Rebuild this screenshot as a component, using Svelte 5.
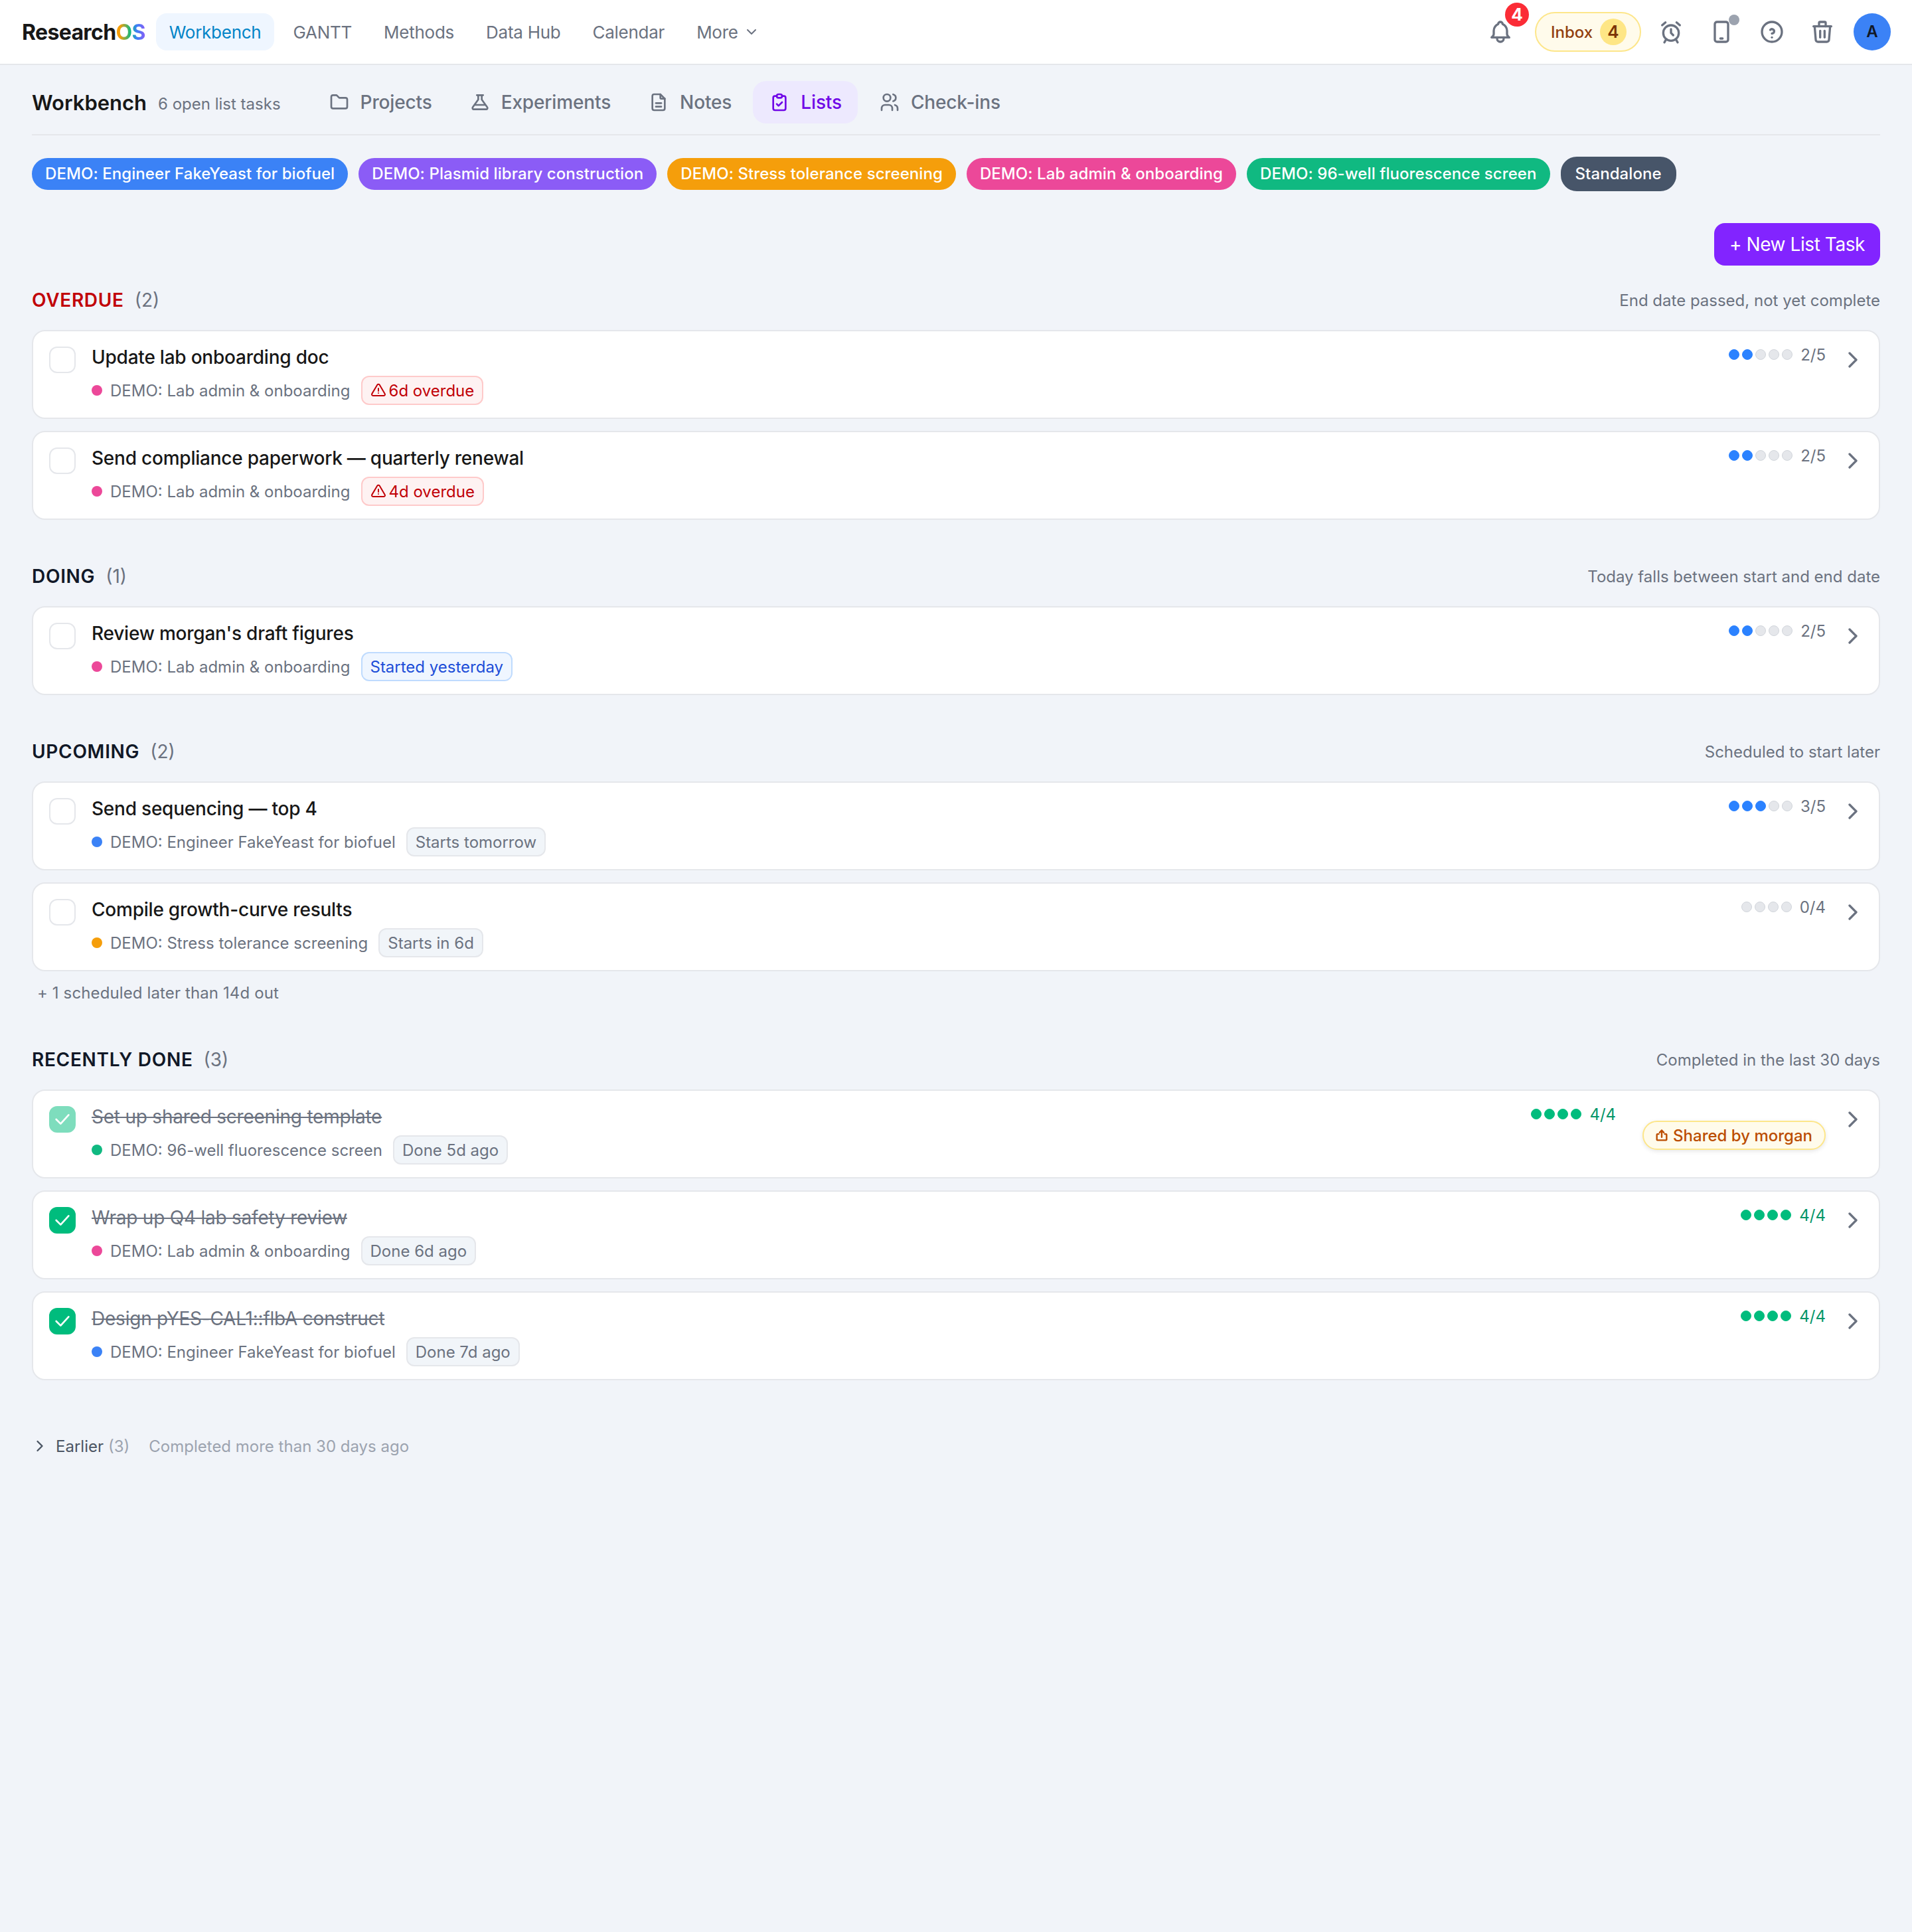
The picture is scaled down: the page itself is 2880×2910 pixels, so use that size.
<script>
  const navLinks = ["GANTT", "Methods", "Data Hub", "Calendar"];

  const paths = {
    bell: ["M10 5a2 2 0 1 1 4 0a7 7 0 0 1 4 6v3a4 4 0 0 0 2 3h-16a4 4 0 0 0 2 -3v-3a7 7 0 0 1 4 -6", "M9 17v1a3 3 0 0 0 6 0v-1"],
    alarm: ["M12 13m-7 0a7 7 0 1 0 14 0a7 7 0 1 0 -14 0", "M12 9.5v3.5l2 2", "M7 3.5l-3 2.5", "M17 3.5l3 2.5", "M7.5 19l-1.5 2.5", "M16.5 19l1.5 2.5"],
    mobile: ["M6 5a2 2 0 0 1 2 -2h8a2 2 0 0 1 2 2v14a2 2 0 0 1 -2 2h-8a2 2 0 0 1 -2 -2z", "M11 18h2"],
    help: ["M12 12m-9 0a9 9 0 1 0 18 0a9 9 0 1 0 -18 0", "M12 17v.01", "M12 13.5a2 2 0 0 0 .914 -3.782a1.98 1.98 0 0 0 -2.414 .483"],
    trash: ["M4 7h16", "M10 11v6", "M14 11v6", "M5 7l1 12a2 2 0 0 0 2 2h8a2 2 0 0 0 2 -2l1 -12", "M9 7v-3a1 1 0 0 1 1 -1h4a1 1 0 0 1 1 1v3"],
    folder: ["M5 4h4l3 3h7a2 2 0 0 1 2 2v8a2 2 0 0 1 -2 2h-14a2 2 0 0 1 -2 -2v-11a2 2 0 0 1 2 -2"],
    flask: ["M8.5 4h7", "M10 4v5l-6.2 8.6a1.5 1.5 0 0 0 1.2 2.4h14a1.5 1.5 0 0 0 1.2 -2.4l-6.2 -8.6v-5", "M6.5 15h11"],
    file: ["M14 3v4a1 1 0 0 0 1 1h4", "M17 21h-10a2 2 0 0 1 -2 -2v-14a2 2 0 0 1 2 -2h7l5 5v11a2 2 0 0 1 -2 2z", "M9 13h6", "M9 17h6"],
    clipboard: ["M9 5h-2a2 2 0 0 0 -2 2v12a2 2 0 0 0 2 2h10a2 2 0 0 0 2 -2v-12a2 2 0 0 0 -2 -2h-2", "M9 5a2 2 0 0 1 2 -2h2a2 2 0 0 1 2 2v0a2 2 0 0 1 -2 2h-2a2 2 0 0 1 -2 -2z", "M9 14l2 2l4 -4"],
    users: ["M9 7m-4 0a4 4 0 1 0 8 0a4 4 0 1 0 -8 0", "M3 21v-2a4 4 0 0 1 4 -4h4a4 4 0 0 1 4 4v2", "M16 3.13a4 4 0 0 1 0 7.75", "M21 21v-2a4 4 0 0 0 -3 -3.85"],
    alert: ["M12 9v4", "M10.363 3.591l-8.106 13.534a1.914 1.914 0 0 0 1.636 2.871h16.214a1.914 1.914 0 0 0 1.636 -2.87l-8.106 -13.536a1.914 1.914 0 0 0 -3.274 0z", "M12 16h.01"],
    share: ["M12 15v-11", "M8.5 7.5l3.5 -3.5l3.5 3.5", "M7 10h-2a1 1 0 0 0 -1 1v8a1 1 0 0 0 1 1h14a1 1 0 0 0 1 -1v-8a1 1 0 0 0 -1 -1h-2"],
    chevron: ["M9 6l6 6l-6 6"],
    down: ["M6 9l6 6l6 -6"],
    check: ["M5 12l5 5l9 -10"]
  };

  const tabs = [
    { label: "Projects", icon: "folder" },
    { label: "Experiments", icon: "flask" },
    { label: "Notes", icon: "file" },
    { label: "Lists", icon: "clipboard", active: true },
    { label: "Check-ins", icon: "users" }
  ];

  const blue = "#3b82f6";
  const pink = "#ec4899";
  const amber = "#f59e0b";
  const green = "#10b981";

  const filters = [
    { label: "DEMO: Engineer FakeYeast for biofuel", color: blue },
    { label: "DEMO: Plasmid library construction", color: "#8b5cf6" },
    { label: "DEMO: Stress tolerance screening", color: amber },
    { label: "DEMO: Lab admin & onboarding", color: pink },
    { label: "DEMO: 96-well fluorescence screen", color: green },
    { label: "Standalone", color: "#475569", selected: true }
  ];

  const lab = { name: "DEMO: Lab admin & onboarding", color: pink };
  const yeast = { name: "DEMO: Engineer FakeYeast for biofuel", color: blue };
  const stress = { name: "DEMO: Stress tolerance screening", color: amber };
  const well = { name: "DEMO: 96-well fluorescence screen", color: green };

  const sections = [
    {
      name: "OVERDUE", count: 2, hint: "End date passed, not yet complete", red: true,
      tasks: [
        { title: "Update lab onboarding doc", project: lab, badge: "6d overdue", kind: "over", done: 2, total: 5 },
        { title: "Send compliance paperwork — quarterly renewal", project: lab, badge: "4d overdue", kind: "over", done: 2, total: 5 }
      ]
    },
    {
      name: "DOING", count: 1, hint: "Today falls between start and end date",
      tasks: [{ title: "Review morgan's draft figures", project: lab, badge: "Started yesterday", kind: "info", done: 2, total: 5 }]
    },
    {
      name: "UPCOMING", count: 2, hint: "Scheduled to start later", note: "+ 1 scheduled later than 14d out",
      tasks: [
        { title: "Send sequencing — top 4", project: yeast, badge: "Starts tomorrow", kind: "", done: 3, total: 5 },
        { title: "Compile growth-curve results", project: stress, badge: "Starts in 6d", kind: "", done: 0, total: 4 }
      ]
    },
    {
      name: "RECENTLY DONE", count: 3, hint: "Completed in the last 30 days",
      tasks: [
        { title: "Set up shared screening template", project: well, badge: "Done 5d ago", kind: "", done: 4, total: 4, complete: true, faded: true, shared: "Shared by morgan" },
        { title: "Wrap up Q4 lab safety review", project: lab, badge: "Done 6d ago", kind: "", done: 4, total: 4, complete: true },
        { title: "Design pYES-CAL1::flbA construct", project: yeast, badge: "Done 7d ago", kind: "", done: 4, total: 4, complete: true }
      ]
    }
  ];
</script>

{#snippet icon(name, size, cls = "")}
  <svg class={cls} width={size} height={size} viewBox="0 0 24 24" fill="none" stroke="currentColor" stroke-width="2" stroke-linecap="round" stroke-linejoin="round">
    {#each paths[name] as d}
      <path {d} />
    {/each}
  </svg>
{/snippet}

<div class="page">
  <header class="topbar">
    <div class="logo">Research<span>OS</span></div>
    <nav class="nav">
      <a class="nav-item current">Workbench</a>
      {#each navLinks as link}
        <a class="nav-item">{link}</a>
      {/each}
      <a class="nav-item more">More {@render icon("down", 24)}</a>
    </nav>
    <div class="actions">
      <button class="icon-btn bell">
        {@render icon("bell", 40)}
        <span class="red-badge">4</span>
      </button>
      <button class="inbox">Inbox <span>4</span></button>
      <button class="icon-btn">{@render icon("alarm", 40)}</button>
      <button class="icon-btn">
        {@render icon("mobile", 40)}
        <span class="phone-dot"></span>
      </button>
      <button class="icon-btn">{@render icon("help", 40)}</button>
      <button class="icon-btn">{@render icon("trash", 40)}</button>
      <div class="avatar">A</div>
    </div>
  </header>

  <main class="main">
    <div class="subhead">
      <h1>Workbench</h1>
      <span class="open-count">6 open list tasks</span>
      <div class="tabs">
        {#each tabs as tab}
          <a class="tab" class:active={tab.active}>
            {@render icon(tab.icon, 32)}
            {tab.label}
          </a>
        {/each}
      </div>
    </div>

    <div class="filters">
      {#each filters as f}
        <span class="filter" class:selected={f.selected} style="background: {f.color}; border-color: {f.color}">{f.label}</span>
      {/each}
    </div>

    <div class="toolbar">
      <button class="new-task">+ New List Task</button>
    </div>

    {#each sections as section}
      <section class="section">
        <div class="section-head">
          <h2 class:red={section.red}>{section.name}</h2>
          <span class="count">({section.count})</span>
          <span class="hint">{section.hint}</span>
        </div>
        <div class="cards">
          {#each section.tasks as task}
            <article class="card">
              <div class="check" class:on={task.complete} class:faded={task.faded}>
                {#if task.complete}
                  {@render icon("check", 32)}
                {/if}
              </div>
              <div class="body">
                <div class="title" class:struck={task.complete}>{task.title}</div>
                <div class="meta">
                  <i class="dot" style="background: {task.project.color}"></i>
                  <span class="project">{task.project.name}</span>
                  <span class="badge {task.kind}">
                    {#if task.kind === "over"}
                      {@render icon("alert", 24)}
                    {/if}
                    {task.badge}
                  </span>
                </div>
              </div>
              <div class="side">
                <div class="progress" class:finished={task.complete}>
                  <div class="steps">
                    {#each Array(task.total) as _, i}
                      <i class:filled={i < task.done}></i>
                    {/each}
                  </div>
                  <span>{task.done}/{task.total}</span>
                </div>
                {#if task.shared}
                  <span class="shared">{@render icon("share", 22)} {task.shared}</span>
                {/if}
              </div>
              <div class="chev">{@render icon("chevron", 40)}</div>
            </article>
          {/each}
        </div>
        {#if section.note}
          <div class="note">{section.note}</div>
        {/if}
      </section>
    {/each}

    <div class="earlier">
      {@render icon("chevron", 28)}
      <span class="earlier-label">Earlier</span>
      <span class="earlier-count">(3)</span>
      <span class="earlier-hint">Completed more than 30 days ago</span>
    </div>
  </main>
</div>

<style>
  :global(body) {
    margin: 0;
    background: #f1f4f9;
  }
  .page {
    min-height: 2910px;
    font-family: Inter, "Liberation Sans", sans-serif;
    background: #f1f4f9;
    color: #111827;
  }
  a, button {
    font-family: inherit;
  }
  button {
    border: none;
    background: none;
    padding: 0;
  }

  .topbar {
    display: flex;
    align-items: center;
    height: 96px;
    padding: 0 32px 0 33px;
    background: #fff;
    border-bottom: 2px solid #e5e7eb;
  }
  .logo {
    font-size: 32px;
    font-weight: 700;
    letter-spacing: -0.02em;
    color: #171717;
  }
  .logo span {
    background: linear-gradient(90deg, #f59e0b 0%, #f59e0b 15%, #10b981 50%, #3b82f6 70%, #8b5cf6 100%);
    -webkit-background-clip: text;
    background-clip: text;
    color: transparent;
  }
  .nav {
    display: flex;
    gap: 8px;
    margin-left: 16px;
  }
  .nav-item {
    display: flex;
    align-items: center;
    gap: 8px;
    height: 56px;
    padding: 0 20px;
    border-radius: 16px;
    font-size: 26px;
    letter-spacing: -0.01em;
    color: #6b7280;
  }
  .nav-item.current {
    background: #eff6ff;
    color: #0284c7;
  }
  .actions {
    display: flex;
    align-items: center;
    gap: 18px;
    margin-left: auto;
  }
  .icon-btn {
    position: relative;
    display: flex;
    align-items: center;
    justify-content: center;
    width: 58px;
    height: 56px;
    color: #6b7280;
  }
  .bell {
    margin-right: 5px;
  }
  .red-badge {
    position: absolute;
    top: -16px;
    left: 36px;
    width: 36px;
    height: 36px;
    border-radius: 50%;
    background: #fb2c36;
    color: #fff;
    font-size: 26px;
    font-weight: 700;
    line-height: 36px;
    text-align: center;
  }
  .phone-dot {
    position: absolute;
    top: 2px;
    right: 2px;
    width: 16px;
    height: 16px;
    border-radius: 50%;
    background: #9ca3af;
  }
  .inbox {
    display: flex;
    align-items: center;
    justify-content: space-between;
    box-sizing: border-box;
    width: 160px;
    height: 60px;
    margin-right: -2px;
    padding: 0 20px 0 22px;
    border: 2px solid #fde68a;
    border-radius: 30px;
    background: #fffbeb;
    color: #92400e;
    font-size: 24px;
    font-weight: 500;
  }
  .inbox span {
    width: 40px;
    height: 40px;
    border-radius: 50%;
    background: #fee685;
    color: #7b3306;
    font-size: 26px;
    font-weight: 600;
    line-height: 40px;
    text-align: center;
  }
  .avatar {
    width: 56px;
    height: 56px;
    border-radius: 50%;
    background: #3b82f6;
    color: #111827;
    font-size: 24px;
    font-weight: 600;
    line-height: 56px;
    text-align: center;
  }

  .main {
    padding: 0 48px;
  }
  .subhead {
    display: flex;
    align-items: center;
    box-sizing: border-box;
    height: 106px;
    padding: 8px 0 0;
    border-bottom: 2px solid #e5e7eb;
  }
  h1 {
    margin: 0;
    font-size: 31px;
    font-weight: 600;
    color: #171717;
  }
  .open-count {
    margin: 5px 0 0 17px;
    font-size: 24px;
    color: #6b7280;
  }
  .tabs {
    display: flex;
    gap: 8px;
    margin-left: 48px;
  }
  .tab {
    display: flex;
    align-items: center;
    gap: 16px;
    height: 64px;
    padding: 0 24px;
    border-radius: 20px;
    font-size: 28px;
    font-weight: 500;
    letter-spacing: -0.005em;
    color: #6b7280;
  }
  .tab.active {
    background: #ede9fe;
    color: #7008e7;
  }

  .filters {
    display: flex;
    align-items: center;
    gap: 16px;
    margin-top: 32px;
  }
  .filter {
    padding: 0 20px;
    height: 48px;
    border-radius: 24px;
    color: #fff;
    font-size: 24px;
    font-weight: 500;
    letter-spacing: 0.003em;
    line-height: 48px;
  }
  .filter.selected {
    border: 2px solid;
  }
  .toolbar {
    display: flex;
    justify-content: flex-end;
    margin: 48px 0 35px;
  }
  .new-task {
    height: 64px;
    width: 250px;
    border-radius: 16px;
    background: #8224ff;
    color: #fff;
    font-size: 28px;
    font-weight: 400;
    letter-spacing: -0.015em;
  }

  .section {
    margin-bottom: 68px;
  }
  .section-head {
    display: flex;
    align-items: center;
    height: 34px;
    margin-bottom: 28px;
  }
  h2 {
    margin: 0;
    font-size: 28px;
    font-weight: 600;
    letter-spacing: 0.025em;
    color: #111827;
  }
  h2.red {
    color: #c10007;
  }
  .count {
    margin-left: 16px;
    font-size: 28px;
    color: #6b7280;
  }
  .hint {
    margin-left: auto;
    font-size: 24px;
    color: #6b7280;
  }
  .cards {
    display: flex;
    flex-direction: column;
    gap: 18px;
  }
  .card {
    display: flex;
    align-items: flex-start;
    gap: 24px;
    min-height: 130px;
    padding: 0 19px 0 24px;
    background: #fff;
    border: 2px solid #e5e7eb;
    border-radius: 20px;
  }
  .check {
    display: flex;
    align-items: center;
    justify-content: center;
    flex: none;
    box-sizing: border-box;
    width: 40px;
    height: 40px;
    margin-top: 23px;
    border: 2px solid #e5e7eb;
    border-radius: 12px;
    background: #fff;
    color: #fff;
  }
  .check.on {
    background: #00bc7d;
    border-color: #00bc7d;
  }
  .check.faded {
    opacity: 0.5;
  }
  .body {
    flex: 1;
    padding-top: 18px;
  }
  .title {
    font-size: 28px;
    font-weight: 500;
    letter-spacing: -0.008em;
    line-height: 42px;
    color: #171717;
  }
  .title.struck {
    font-weight: 400;
    color: #6b7280;
    text-decoration: line-through;
  }
  .meta {
    display: flex;
    align-items: center;
    height: 44px;
    margin-top: 7px;
  }
  .dot {
    width: 16px;
    height: 16px;
    border-radius: 50%;
    margin-right: 12px;
  }
  .project {
    font-size: 24px;
    color: #6b7280;
  }
  .badge {
    display: flex;
    align-items: center;
    gap: 4px;
    box-sizing: border-box;
    height: 44px;
    margin-left: 16px;
    padding: 0 12px;
    border: 2px solid #e5e7eb;
    border-radius: 12px;
    background: #f1f5f9;
    color: #6b7280;
    font-size: 24px;
  }
  .badge.over {
    border-color: #fecaca;
    background: #fef2f2;
    color: #c10007;
  }
  .badge.info {
    border-color: #bfdbfe;
    background: #eff6ff;
    color: #1d4ed8;
  }
  .side {
    display: flex;
    align-items: flex-start;
    gap: 40px;
    padding-top: 18px;
  }
  .progress {
    display: flex;
    align-items: center;
    gap: 12px;
    height: 34px;
    font-size: 24px;
    color: #6b7280;
  }
  .progress.finished {
    color: #059669;
  }
  .steps {
    display: flex;
    gap: 4px;
  }
  .steps i {
    box-sizing: border-box;
    width: 16px;
    height: 16px;
    border-radius: 50%;
    background: #e5e7eb;
    border: 1px solid #d1d5db;
  }
  .steps i.filled {
    background: #2b82ff;
    border-color: #2b82ff;
  }
  .finished .steps i.filled {
    background: #00bc7d;
    border-color: #00bc7d;
  }
  .shared {
    display: flex;
    align-items: center;
    gap: 6px;
    box-sizing: border-box;
    height: 44px;
    margin-top: 27px;
    padding: 0 18px 0 16px;
    border: 2px solid #fde68a;
    border-radius: 22px;
    background: #fffbeb;
    color: #bb4d00;
    font-size: 24px;
    font-weight: 500;
    box-shadow: 0 2px 6px rgba(0, 0, 0, 0.1);
  }
  .shared svg {
    stroke-width: 2.6;
  }
  .chev {
    display: flex;
    margin: 23px 0 0 -3px;
    color: #6b7280;
  }
  .note {
    margin: 14px 0 -4px 8px;
    font-size: 24px;
    letter-spacing: 0.005em;
    line-height: 38px;
    color: #6b7280;
  }
  .earlier {
    display: flex;
    align-items: center;
    height: 36px;
    margin-top: 81px;
    font-size: 24px;
    color: #4b5563;
  }
  .earlier svg {
    margin-left: -2px;
  }
  .earlier-label {
    margin-left: 10px;
    color: #4b5563;
  }
  .earlier-count {
    margin-left: 7px;
    color: #9ca3af;
  }
  .earlier-hint {
    margin-left: 29px;
    color: #9ca3af;
  }
</style>
